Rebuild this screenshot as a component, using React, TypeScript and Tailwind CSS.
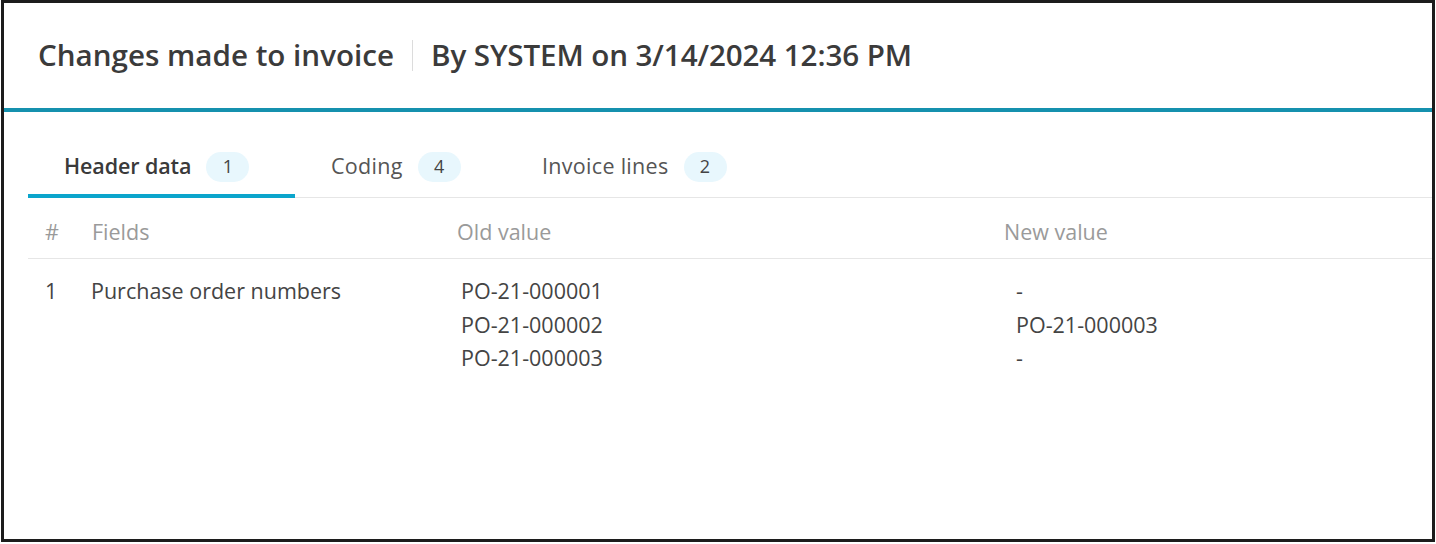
import React from 'react'

const tabs = [
  { label: 'Header data', count: 1, active: true },
  { label: 'Coding', count: 4 },
  { label: 'Invoice lines', count: 2 },
]

const oldValues = ['PO-21-000001', 'PO-21-000002', 'PO-21-000003']
const newValues = ['-', 'PO-21-000003', '-']

export default function App() {
  return (
    <div className="w-[1436px] h-[544px] bg-white pl-px pr-px pb-[2px] font-['Open_Sans',sans-serif]">
      <div className="h-full border-[3px] border-[#1c1c1c] flex flex-col">
        {/* Title bar */}
        <div className="h-[109px] shrink-0 flex items-center pl-[34px] border-b-4 border-[#1591ae]">
          <h1 className="text-[29.6px] text-[#3b3b3b] font-semibold">Changes made to invoice</h1>
          <div className="w-px h-[31px] bg-[#dcdcdc] mx-[18px]" />
          <span className="text-[29.6px] text-[#3b3b3b] font-semibold tracking-[-0.1px]">By SYSTEM on 3/14/2024 12:36 PM</span>
        </div>

        <div className="pl-[24px] pt-[24px]">
          {/* Tabs */}
          <div className="flex border-b border-[#e6e6e6] h-[62px] items-stretch">
            {tabs.map((t) => (
              <div
                key={t.label}
                className={
                  t.active
                    ? 'flex items-center pt-[3px] pl-[36px] w-[267px] border-b-[4px] border-[#0ba5cc] mb-[-1px]'
                    : t.label === 'Coding'
                    ? 'flex items-center pl-[36px] w-[247px]'
                    : 'flex items-center'
                }
              >
                <span
                  className={
                    t.active
                      ? 'text-[21.5px] font-semibold text-[#3a3a3a] tracking-[-0.1px]'
                      : 'text-[21.5px] text-[#555] tracking-[0.3px]'
                  }
                >
                  {t.label}
                </span>
                <span className="ml-[15px] w-[43px] h-[30px] rounded-full bg-[#e8f7fd] flex items-center justify-center text-[18px] text-[#444]">
                  {t.count}
                </span>
              </div>
            ))}
          </div>

          {/* Table header */}
          <div className="flex items-center h-[61px] pt-[8px] border-b border-[#e6e6e6] text-[21.5px] text-[#9a9a9a]">
            <div className="w-[64px] pl-[17px]">#</div>
            <div className="w-[365px]">Fields</div>
            <div className="w-[547px]">Old value</div>
            <div>New value</div>
          </div>

          {/* Row */}
          <div className="flex pt-[15px] text-[21.5px] text-[#444] leading-[33.5px]">
            <div className="w-[63px] pl-[17px]">1</div>
            <div className="w-[370px]">Purchase order numbers</div>
            <div className="w-[555px] flex flex-col">
              {oldValues.map((v) => (
                <span key={v}>{v}</span>
              ))}
            </div>
            <div className="flex flex-col">
              {newValues.map((v, i) => (
                <span key={i}>{v}</span>
              ))}
            </div>
          </div>
        </div>
      </div>
    </div>
  )
}
